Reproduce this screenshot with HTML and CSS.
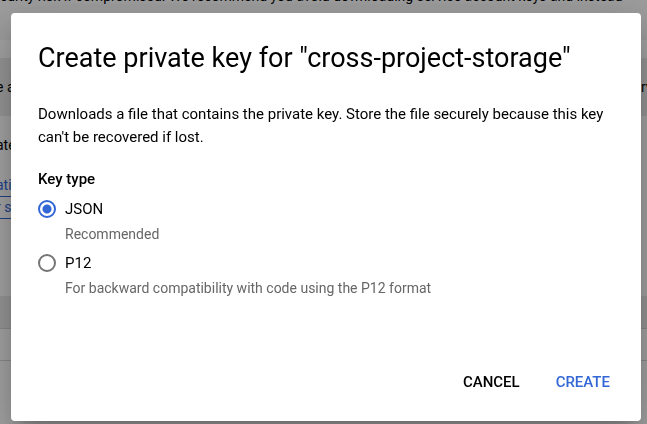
FILE: index.html
```html
<!DOCTYPE html>
<html lang="en">
<head>
<meta charset="utf-8">
<title>Create private key</title>
<link rel="stylesheet" href="styles.css">
</head>
<body>
<main class="page">
  <p class="notice">curity risk if compromised. We recommend you avoid downloading service account keys and instead</p>
  <div class="gap"></div>
  <div class="band"><span>e a</span><span>rv</span></div>
  <div class="details">
    <p class="label">ate</p>
    <p class="links"><a href="#">ati</a><a href="#">r s</a></p>
  </div>
  <div class="list-head"></div>
  <div class="list-row"></div>
</main>
<div class="scrim">
  <form class="dialog" role="dialog" aria-modal="true" aria-labelledby="title">
    <h1 class="title" id="title">Create private key for "cross-project-storage"</h1>
    <p class="description">Downloads a file that contains the private key. Store the file securely because this key can't be recovered if lost.</p>
    <fieldset class="key-type">
      <legend>Key type</legend>
      <div class="option">
        <input type="radio" name="type" id="json" aria-describedby="json-hint" checked>
        <label for="json">JSON</label>
        <p class="hint" id="json-hint">Recommended</p>
      </div>
      <div class="option">
        <input type="radio" name="type" id="p12" aria-describedby="p12-hint">
        <label for="p12">P12</label>
        <p class="hint" id="p12-hint">For backward compatibility with code using the P12 format</p>
      </div>
    </fieldset>
    <div class="actions">
      <button type="button">CANCEL</button>
      <button type="submit" class="primary">CREATE</button>
    </div>
  </form>
</div>
</body>
</html>
```
FILE: styles.css
```css
* {
  box-sizing: border-box;
}

body {
  margin: 0;
  font: 15px/24px Roboto, "Liberation Sans", sans-serif;
  color: #000;
  background: #fff;
  overflow: hidden;
}

p {
  margin: 0;
}

.page {
  height: 100vh;
  overflow: hidden;
  font-size: 14px;
  white-space: nowrap;
}

.notice {
  height: 56px;
  margin-top: -16px;
  background: #f5f5f5;
}

.gap {
  height: 18px;
}

.band {
  display: flex;
  justify-content: space-between;
  height: 58px;
  line-height: 58px;
  background: #ebebeb;
}

.band span:first-child,
.label,
.links {
  margin-left: -4px;
}

.band span:last-child {
  width: 6px;
}

.details {
  height: 180px;
  padding-top: 17px;
}

.links {
  display: flex;
  flex-direction: column;
  align-items: flex-start;
  padding-top: 18px;
}

.links a {
  line-height: 21px;
  color: #3367d6;
  text-decoration: none;
  border-bottom: 1px solid #3367d6;
}

.list-head,
.list-row {
  height: 32px;
  border-bottom: 1px solid #d8d8d8;
}

.list-head {
  height: 33px;
  background: #ebebeb;
}

.scrim {
  position: fixed;
  inset: 0;
  display: flex;
  padding: 13px 6px 3px 11px;
  background: rgba(0, 0, 0, 0.36);
}

.dialog {
  flex: 1;
  display: flex;
  flex-direction: column;
  padding: 26px 23px 23px 27px;
  border-radius: 4px;
  background: #fff;
  box-shadow: 0 11px 15px -7px rgba(0, 0, 0, 0.2), 0 24px 38px 3px rgba(0, 0, 0, 0.14), 0 9px 46px 8px rgba(0, 0, 0, 0.12);
}

.title {
  margin: 0;
  font-size: 27px;
  line-height: 38px;
  font-weight: 400;
}

.description {
  margin-top: 26px;
  line-height: 23px;
}

.key-type {
  margin: 18px 0 0;
  padding: 0;
  border: 0;
}

.key-type legend {
  padding: 0 0 2px;
  font-weight: 500;
}

.option {
  display: grid;
  grid-template-columns: 18px 1fr;
  column-gap: 9px;
  align-items: center;
  padding-top: 3px;
}

.option input {
  appearance: none;
  width: 18px;
  height: 18px;
  margin: 0;
  border: 2px solid #757575;
  border-radius: 50%;
}

.option input:checked {
  border-color: #3367d6;
  background: radial-gradient(circle, #3367d6 4px, #fff 5px);
}

.option label {
  line-height: 26px;
}

.hint {
  grid-column: 2;
  font-size: 14px;
  line-height: 25px;
  color: #666;
}

.actions {
  display: flex;
  justify-content: flex-end;
  gap: 20px;
  margin-top: auto;
}

.actions button {
  padding: 4px 8px;
  border: 0;
  background: none;
  font: 500 15px/23px Roboto, "Liberation Sans", sans-serif;
  color: #000;
}

.actions .primary {
  color: #3367d6;
}
```
